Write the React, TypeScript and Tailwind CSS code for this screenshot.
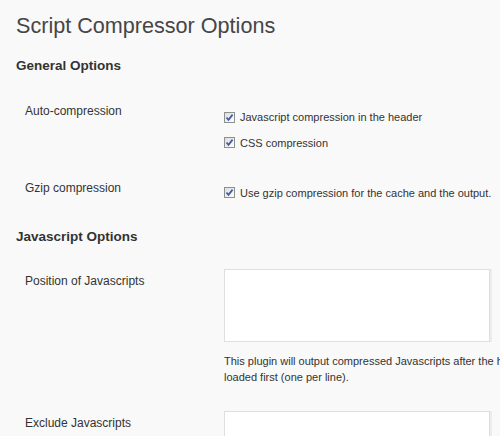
import React from 'react';

const font = { fontFamily: '"Liberation Sans", Arial, sans-serif' };

const Checkbox = ({ label }: { label: string }) => (
  <label className="flex h-[16px] items-center text-[11px] leading-[16px] text-[#333] whitespace-nowrap">
    <span className="mr-[5px] flex h-[11px] w-[11px] shrink-0 items-center justify-center border border-[#8e8f8f] bg-gradient-to-br from-[#dcdcdc] to-[#ffffff]">
      <svg width="9" height="9" viewBox="0 0 9 9">
        <path d="M1.5 4.5 L3.5 6.8 L7.6 1.6" fill="none" stroke="#3b5ba8" strokeWidth="1.7" />
      </svg>
    </span>
    {label}
  </label>
);

const Label = ({ children, top }: { children: React.ReactNode; top: string }) => (
  <div className={`w-[208px] shrink-0 pl-[9px] text-[12px] leading-[16px] text-[#333] ${top}`}>{children}</div>
);

const TextArea = () => (
  <div className="h-[73px] w-[266px] border border-[#dfdfdf] bg-white shadow-[2px_0_0_#ececec]" />
);

export default function App() {
  return (
    <div style={font} className="h-[436px] w-[500px] overflow-hidden bg-[#f9f9f9] pl-[16px]">
      <h2 className="pt-[11px] text-[21.6px] leading-[29px] font-normal text-[#464646] whitespace-nowrap">
        Script Compressor Options
      </h2>

      <h3 className="mt-[17px] text-[13.5px] leading-[18px] font-bold text-[#333]">General Options</h3>

      <div className="flex items-start">
        <Label top="pt-[28px]">Auto-compression</Label>
        <div className="flex flex-col gap-[9.5px] pt-[34px]">
          <Checkbox label="Javascript compression in the header" />
          <Checkbox label="CSS compression" />
        </div>
      </div>

      <div className="flex items-start">
        <Label top="pt-[29.5px]">Gzip compression</Label>
        <div className="pt-[34.4px]">
          <Checkbox label="Use gzip compression for the cache and the output." />
        </div>
      </div>

      <h3 className="mt-[27.5px] text-[13.5px] leading-[18px] font-bold text-[#333]">Javascript Options</h3>

      <div className="flex items-start">
        <Label top="pt-[26.2px]">Position of Javascripts</Label>
        <div className="pt-[22.4px]">
          <TextArea />
          <p className="mt-[12.7px] text-[11px] leading-[15.5px] text-[#333] whitespace-nowrap">
            This plugin will output compressed Javascripts after the header. These Javascripts will be
            <br />
            loaded first (one per line).
          </p>
        </div>
      </div>

      <div className="flex items-start">
        <Label top="pt-[29.8px]">Exclude Javascripts</Label>
        <div className="pt-[25.3px]">
          <TextArea />
        </div>
      </div>
    </div>
  );
}
